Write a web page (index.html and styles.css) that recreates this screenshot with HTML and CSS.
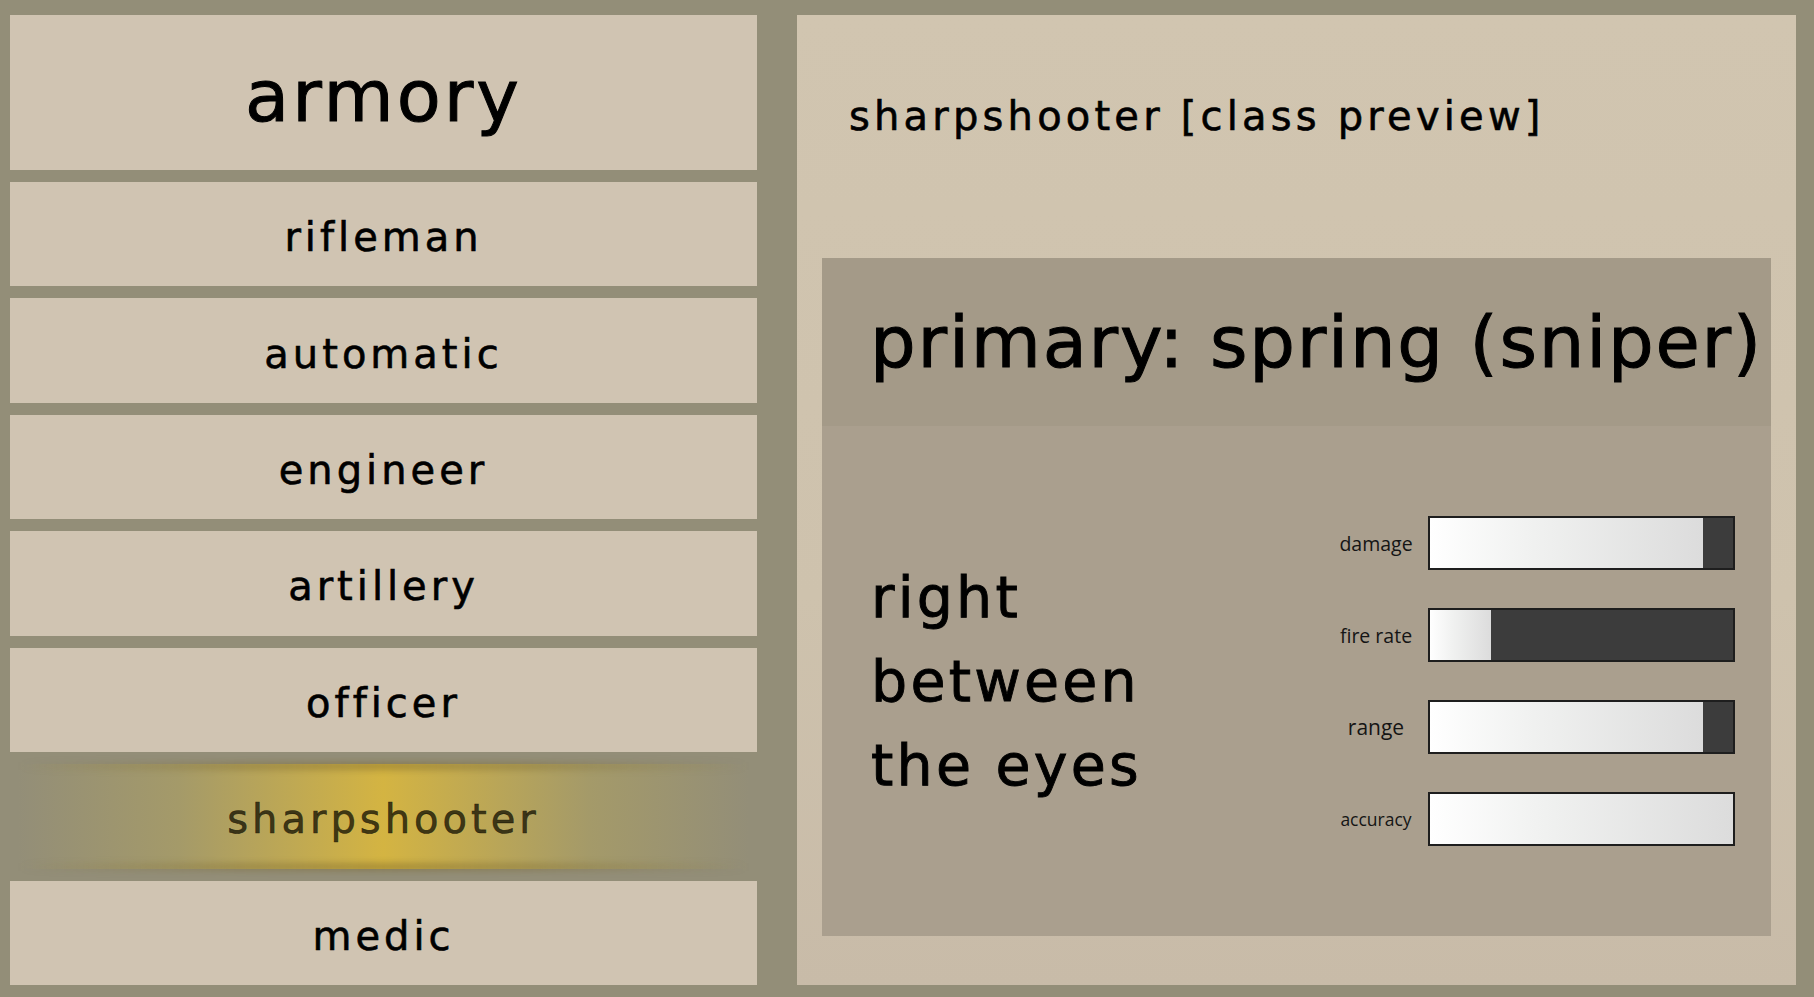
FILE: index.html
```html
<!DOCTYPE html>
<html lang="en">
<head>
<meta charset="utf-8">
<title>armory</title>
<link rel="stylesheet" href="styles.css">
</head>
<body>
<div class="app">
  <nav class="menu">
    <div class="menu-title">armory</div>
    <div class="menu-item">rifleman</div>
    <div class="menu-item">automatic</div>
    <div class="menu-item">engineer</div>
    <div class="menu-item">artillery</div>
    <div class="menu-item">officer</div>
    <div class="menu-item active">sharpshooter</div>
    <div class="menu-item">medic</div>
  </nav>
  <main class="preview">
    <div class="preview-title">sharpshooter [class preview]</div>
    <section class="weapon">
      <div class="weapon-head">primary: spring (sniper)</div>
      <div class="weapon-body">
        <div class="tagline">right<br>between<br>the eyes</div>
        <div class="stats">
          <div class="stat">
            <span class="stat-label">damage</span>
            <div class="bar"><div class="bar-fill" style="width:90%"></div></div>
          </div>
          <div class="stat">
            <span class="stat-label">fire rate</span>
            <div class="bar"><div class="bar-fill" style="width:20%"></div></div>
          </div>
          <div class="stat">
            <span class="stat-label stat-label--wide">range</span>
            <div class="bar"><div class="bar-fill" style="width:90%"></div></div>
          </div>
          <div class="stat">
            <span class="stat-label stat-label--small">accuracy</span>
            <div class="bar"><div class="bar-fill" style="width:100%"></div></div>
          </div>
        </div>
      </div>
    </section>
  </main>
</div>
</body>
</html>
```
FILE: styles.css
```css
* { box-sizing: border-box; }

html, body {
  margin: 0;
  padding: 0;
  width: 1814px;
  height: 997px;
  overflow: hidden;
  background: #938e78;
}

body {
  font-family: "DejaVu Sans", sans-serif;
  color: #000;
}

.app {
  display: flex;
  gap: 40px;
  height: 997px;
  padding: 15px 18px 12px 10px;
}

/* left menu */
.menu {
  width: 747px;
  display: flex;
  flex-direction: column;
  gap: 12px;
}

.menu-title {
  height: 155px;
  flex: none;
  background: #d0c4b2;
  display: flex;
  align-items: center;
  justify-content: center;
  font-size: 72px;
  letter-spacing: 3px;
  padding-top: 6px;
  -webkit-text-stroke: 1px #000;
}

.menu-item {
  flex: 1;
  background: #d0c4b2;
  display: flex;
  align-items: center;
  justify-content: center;
  font-size: 40px;
  letter-spacing: 4px;
  padding-top: 6px;
  white-space: nowrap;
  -webkit-text-stroke: 0.6px #000;
}

.menu-item.active {
  margin: 0 8px;
  background: linear-gradient(90deg,
    rgba(147, 142, 120, 0) 0%,
    rgba(170, 158, 100, 0.75) 22%,
    #d4b442 50%,
    rgba(170, 158, 100, 0.75) 78%,
    rgba(147, 142, 120, 0) 100%);
  color: rgba(25, 22, 5, 0.8);
  -webkit-text-stroke: 0.6px rgba(25, 22, 5, 0.8);
  position: relative;
}

.menu-item.active::before,
.menu-item.active::after {
  content: "";
  position: absolute;
  left: 0;
  right: 0;
  height: 8px;
  background: linear-gradient(90deg,
    rgba(120, 100, 40, 0) 0%,
    rgba(120, 100, 40, 0.35) 30%,
    rgba(120, 100, 40, 0.45) 50%,
    rgba(120, 100, 40, 0.35) 70%,
    rgba(120, 100, 40, 0) 100%);
  filter: blur(3px);
}

.menu-item.active::before { top: -2px; }
.menu-item.active::after { bottom: -2px; }

/* right preview */
.preview {
  flex: 1;
  display: flex;
  flex-direction: column;
  padding: 0 25px 49px;
  background: linear-gradient(180deg, #d1c5b0 0%, #cec2ad 60%, #c8bba8 100%);
}

.preview-title {
  height: 243px;
  flex: none;
  display: flex;
  align-items: center;
  padding: 0 0 42px 27px;
  font-size: 40px;
  letter-spacing: 4.2px;
  white-space: nowrap;
  -webkit-text-stroke: 0.6px #000;
}

.weapon {
  flex: 1;
  display: flex;
  flex-direction: column;
}

.weapon-head {
  height: 168px;
  flex: none;
  background: #a49a88;
  display: flex;
  align-items: center;
  padding-left: 48px;
  font-size: 72px;
  letter-spacing: 1.8px;
  white-space: nowrap;
  overflow: hidden;
  -webkit-text-stroke: 1px #000;
}

.weapon-body {
  flex: 1;
  background: #aa9f8e;
  display: flex;
  align-items: center;
  justify-content: space-between;
  padding: 0 36px 0 49px;
}

.tagline {
  font-size: 57px;
  line-height: 84px;
  letter-spacing: 3.2px;
  -webkit-text-stroke: 0.9px #000;
}

.stats {
  display: flex;
  flex-direction: column;
  gap: 38px;
}

.stat {
  display: flex;
  align-items: center;
  gap: 15px;
}

.stat-label {
  width: 74px;
  text-align: center;
  font-family: "Open Sans", "Noto Sans", sans-serif;
  font-size: 19.5px;
  color: #151515;
  white-space: nowrap;
}

.stat-label--wide { font-size: 21px; }
.stat-label--small { font-size: 17.5px; }

.bar {
  width: 307px;
  height: 54px;
  border: 2px solid #1e1e1e;
  background: #3c3c3c;
}

.bar-fill {
  height: 100%;
  background: linear-gradient(90deg, #ffffff 0%, #f1f2f1 35%, #dcdcdc 100%);
}
```
